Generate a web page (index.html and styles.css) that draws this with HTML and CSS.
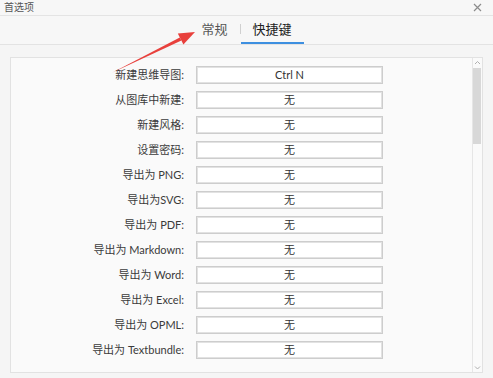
FILE: index.html
```html
<!DOCTYPE html>
<html lang="zh">
<head>
<meta charset="utf-8">
<title>首选项</title>
<link rel="stylesheet" href="styles.css">
</head>
<body>
<div class="window">
  <div class="titlebar">
    <span class="title">首选项</span>
    <svg class="close" width="9" height="9" viewBox="0 0 9 9"><path d="M1 1 L8 8 M8 1 L1 8" stroke="#8c8c8c" stroke-width="1.2" fill="none"/></svg>
  </div>
  <div class="tabs">
    <div class="tab">常规</div>
    <div class="sep"></div>
    <div class="tab active">快捷键</div>
  </div>
  <div class="content">
    <div class="panel">
      <div class="list">
        <div class="row"><span class="label">新建思维导图:</span><span class="key">Ctrl N</span></div>
        <div class="row"><span class="label">从图库中新建:</span><span class="key">无</span></div>
        <div class="row"><span class="label">新建风格:</span><span class="key">无</span></div>
        <div class="row"><span class="label">设置密码:</span><span class="key">无</span></div>
        <div class="row"><span class="label">导出为 PNG:</span><span class="key">无</span></div>
        <div class="row"><span class="label">导出为SVG:</span><span class="key">无</span></div>
        <div class="row"><span class="label">导出为 PDF:</span><span class="key">无</span></div>
        <div class="row"><span class="label">导出为 Markdown:</span><span class="key">无</span></div>
        <div class="row"><span class="label">导出为 Word:</span><span class="key">无</span></div>
        <div class="row"><span class="label">导出为 Excel:</span><span class="key">无</span></div>
        <div class="row"><span class="label">导出为 OPML:</span><span class="key">无</span></div>
        <div class="row"><span class="label">导出为 Textbundle:</span><span class="key">无</span></div>
      </div>
      <div class="scrollbar">
        <svg class="arrow-btn" width="9" height="9" viewBox="0 0 9 9"><path d="M2 6 L4.5 3.5 L7 6" stroke="#b0b0b0" stroke-width="1" fill="none"/></svg>
        <div class="thumb"></div>
        <div class="track"></div>
        <svg class="arrow-btn" width="9" height="9" viewBox="0 0 9 9"><path d="M2 3.5 L4.5 6 L7 3.5" stroke="#b0b0b0" stroke-width="1" fill="none"/></svg>
      </div>
    </div>
  </div>
</div>
<svg class="annotation" width="493" height="378" viewBox="0 0 493 378">
  <polygon points="112,72.8 181.4,40.6 179.8,37.4" fill="#e8403c"/>
  <polygon points="195,32 183.4,44.6 177.8,33.4" fill="#e8403c"/>
</svg>
</body>
</html>
```

FILE: styles.css
```css
html, body {
  margin: 0;
  padding: 0;
}
body {
  width: 493px;
  height: 378px;
  background: #f5f5f5;
  font-family: "Lato", "Noto Sans CJK SC", sans-serif;
  color: #333;
  overflow: hidden;
  position: relative;
}
.window {
  display: flex;
  flex-direction: column;
  height: 378px;
}
.titlebar {
  height: 15px;
  border-bottom: 1px solid #e4e4e4;
  display: flex;
  align-items: center;
  justify-content: space-between;
  padding: 0 11px 0 4px;
  background: #f7f7f7;
}
.title {
  font-size: 10px;
  line-height: 15px;
  color: #555;
}
.close {
  display: block;
}
.tabs {
  height: 28px;
  border-bottom: 1px solid #e3e3e3;
  display: flex;
  justify-content: center;
  align-items: flex-start;
  background: #f7f7f7;
}
.tab {
  height: 26px;
  line-height: 26px;
  padding: 0 12px;
  font-size: 13px;
  color: #555;
  border-bottom: 2px solid transparent;
}
.tab.active {
  color: #222;
  border-bottom-color: #3d8fe0;
}
.sep {
  width: 1px;
  height: 10px;
  margin-top: 8px;
  background: #d0d0d0;
}
.content {
  flex: 1;
  padding: 12px 10px 5px 10px;
  display: flex;
}
.panel {
  flex: 1;
  border: 1px solid #e2e2e2;
  background: #fafafa;
  display: flex;
}
.list {
  flex: 1;
  padding-top: 8px;
  display: flex;
  flex-direction: column;
  gap: 7px;
}
.row {
  display: grid;
  grid-template-columns: 173px 187px;
  column-gap: 12px;
  align-items: center;
  height: 18px;
}
.label {
  text-align: right;
  font-size: 11px;
  line-height: 18px;
  color: #3a3a3a;
  white-space: nowrap;
}
.key {
  box-sizing: border-box;
  height: 18px;
  border: 1px solid #cdcdcd;
  box-shadow: inset 0 0 0 1px #e2e2e2;
  background: #fff;
  text-align: center;
  font-size: 11px;
  line-height: 16px;
  color: #333;
}
.scrollbar {
  width: 9px;
  border-left: 1px solid #e6e6e6;
  display: flex;
  flex-direction: column;
  background: #fafafa;
}
.arrow-btn {
  display: block;
  height: 9px;
  flex: none;
}
.thumb {
  height: 76px;
  margin: 1px 1px 0 0;
  background: #d8d8d8;
}
.track {
  flex: 1;
}
.annotation {
  position: absolute;
  left: 0;
  top: 0;
  pointer-events: none;
}
```
